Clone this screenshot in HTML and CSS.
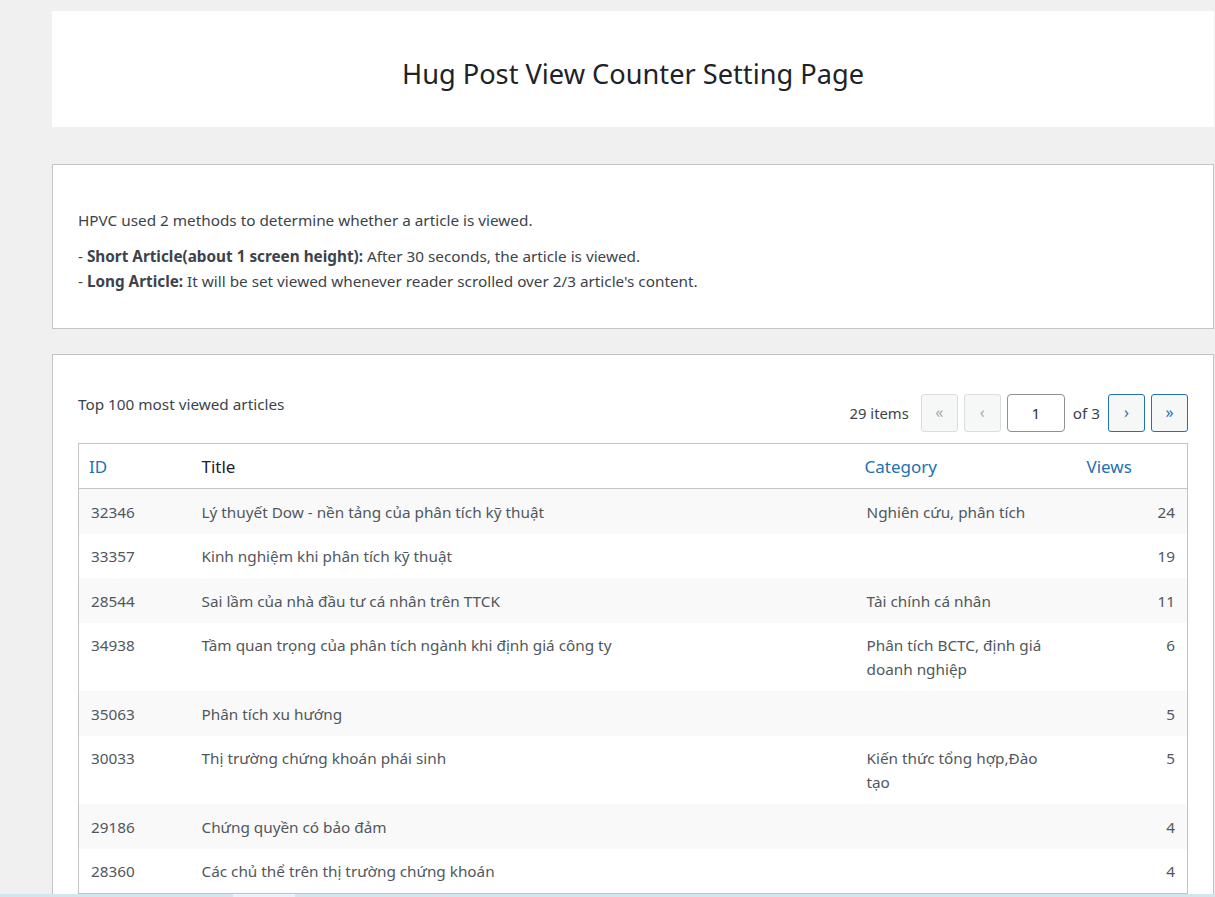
FILE: index.html
```html
<!DOCTYPE html>
<html lang="vi">
<head>
<meta charset="utf-8">
<title>Hug Post View Counter Setting Page</title>
<link rel="stylesheet" href="styles.css">
</head>
<body>
<div class="wrap">
  <header class="page-head">
    <h1>Hug Post View Counter Setting Page</h1>
  </header>

  <section class="card info">
    <p class="lead">HPVC used 2 methods to determine whether a article is viewed.</p>
    <p class="methods">- <strong>Short Article(about 1 screen height):</strong> After 30 seconds, the article is viewed.<br>
    - <strong>Long Article:</strong> It will be set viewed whenever reader scrolled over 2/3 article's content.</p>
  </section>

  <section class="card list">
    <div class="list-top">
      <div class="list-title">Top 100 most viewed articles</div>
      <div class="pager">
        <span class="count">29 items</span>
        <span class="pbtn disabled">&laquo;</span>
        <span class="pbtn disabled">&lsaquo;</span>
        <input class="pinput" type="text" value="1">
        <span class="of">of 3</span>
        <span class="pbtn active">&rsaquo;</span>
        <span class="pbtn active">&raquo;</span>
      </div>
    </div>

    <table class="views-table">
      <thead>
        <tr>
          <th class="c-id"><a>ID</a></th>
          <th class="c-title">Title</th>
          <th class="c-cat"><a>Category</a></th>
          <th class="c-views"><a>Views</a></th>
        </tr>
      </thead>
      <tbody>
        <tr><td class="c-id">32346</td><td class="c-title">Lý thuyết Dow - nền tảng của phân tích kỹ thuật</td><td class="c-cat">Nghiên cứu, phân tích</td><td class="c-views">24</td></tr>
        <tr><td class="c-id">33357</td><td class="c-title">Kinh nghiệm khi phân tích kỹ thuật</td><td class="c-cat"></td><td class="c-views">19</td></tr>
        <tr><td class="c-id">28544</td><td class="c-title">Sai lầm của nhà đầu tư cá nhân trên TTCK</td><td class="c-cat">Tài chính cá nhân</td><td class="c-views">11</td></tr>
        <tr><td class="c-id">34938</td><td class="c-title">Tầm quan trọng của phân tích ngành khi định giá công ty</td><td class="c-cat">Phân tích BCTC, định giá doanh nghiệp</td><td class="c-views">6</td></tr>
        <tr><td class="c-id">35063</td><td class="c-title">Phân tích xu hướng</td><td class="c-cat"></td><td class="c-views">5</td></tr>
        <tr><td class="c-id">30033</td><td class="c-title">Thị trường chứng khoán phái sinh</td><td class="c-cat">Kiến thức tổng hợp,Đào tạo</td><td class="c-views">5</td></tr>
        <tr><td class="c-id">29186</td><td class="c-title">Chứng quyền có bảo đảm</td><td class="c-cat"></td><td class="c-views">4</td></tr>
        <tr><td class="c-id">28360</td><td class="c-title">Các chủ thể trên thị trường chứng khoán</td><td class="c-cat"></td><td class="c-views">4</td></tr>
      </tbody>
    </table>
  </section>
</div>
<div class="bottom-strip"><span class="thumb"></span></div>
</body>
</html>
```

FILE: styles.css
```css
html, body {
  margin: 0;
  padding: 0;
}
body {
  background: #f0f0f1;
  font-family: "Noto Sans", "Open Sans", sans-serif;
  color: #3c434a;
  font-size: 15px;
}
.wrap {
  margin: 0 1px 0 52px;
  padding-top: 11px;
  padding-bottom: 40px;
}
.page-head {
  background: #fff;
  height: 116px;
  display: flex;
  align-items: center;
  justify-content: center;
}
.page-head h1 {
  margin: 0;
  font-size: 27.2px;
  font-weight: 400;
  color: #1d2327;
  padding-top: 9px;
}
.card {
  background: #fff;
  border: 1px solid #c3c4c7;
  margin-top: 37px;
}
.info {
  height: 163px;
  padding: 0 25px;
  box-sizing: content-box;
}
.info p {
  margin: 0;
  font-size: 15.3px;
  line-height: 25px;
}
.info .lead {
  margin-top: 43px;
  margin-bottom: 11px;
}
.info strong {
  font-weight: 700;
  color: #3c434a;
}
.list {
  margin-top: 25px;
  padding: 0 25px 30px;
}
.list-top {
  display: flex;
  justify-content: space-between;
  align-items: flex-start;
  padding-top: 37px;
  margin-bottom: 11px;
}
.list-title {
  font-size: 15.3px;
  line-height: 24px;
}
.pager {
  display: flex;
  align-items: center;
  gap: 6px;
  margin-top: 2px;
  font-size: 15.3px;
}
.count {
  margin-right: 6px;
  font-size: 14.8px;
  color: #3c434a;
}
.of {
  margin: 0 2px;
}
.pbtn {
  box-sizing: border-box;
  width: 37px;
  height: 38px;
  border: 1px solid #dcdcde;
  border-radius: 3px;
  background: #f6f7f7;
  color: #a7aaad;
  display: flex;
  align-items: center;
  justify-content: center;
  font-size: 16px;
  padding-bottom: 2px;
}
.pbtn.active {
  border-color: #2271b1;
  color: #2271b1;
}
.pinput {
  box-sizing: border-box;
  width: 58px;
  height: 38px;
  border: 1px solid #8c8f94;
  border-radius: 4px;
  background: #fff;
  color: #2c3338;
  text-align: center;
  font-family: inherit;
  font-size: 15.3px;
  padding: 0;
  margin: 0;
}
.views-table {
  width: 100%;
  border-collapse: collapse;
  border: 1px solid #c3c4c7;
  table-layout: fixed;
}
.views-table th {
  text-align: left;
  font-weight: 400;
  font-size: 17px;
  color: #1d2327;
  height: 45px;
  padding: 0 10px;
  border-bottom: 1px solid #c3c4c7;
  box-sizing: border-box;
}
.views-table th a {
  color: #2271b1;
}
.views-table td {
  vertical-align: top;
  font-size: 15.3px;
  line-height: 24px;
  color: #50575e;
  padding: 10.5px 12px 10px;
}
.views-table tbody tr:nth-child(odd) {
  background: #f9f9f9;
}
.c-id { width: 112px; }
.c-cat { width: 220px; }
.c-views { width: 113px; }
th.c-title { padding-left: 11px; }
td.c-title { padding-left: 11px; }
th.c-cat { padding-left: 10px; }
td.c-cat { padding-left: 12px; padding-right: 30px; }
th.c-views { padding-left: 12px; }
td.c-views { text-align: right; }
.bottom-strip {
  position: fixed;
  left: 0;
  right: 0;
  bottom: 0;
  height: 3px;
  background: #d3e6f0;
}
.bottom-strip .thumb {
  position: absolute;
  left: 233px;
  width: 62px;
  top: 0;
  bottom: 0;
  background: #e9f3f9;
}
```
